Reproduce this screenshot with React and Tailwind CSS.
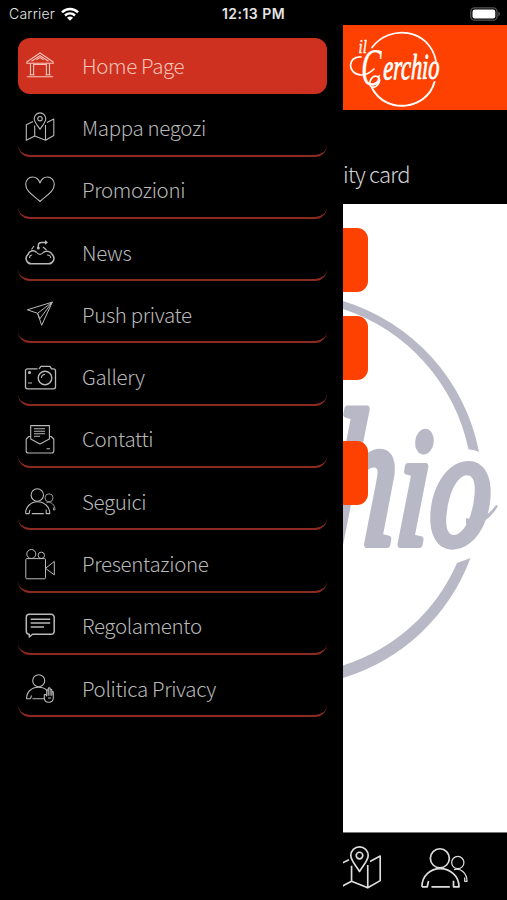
import React from 'react';

function HomeIcon() {
  return (
    <>
      <path d="M1.8 11 15 2l13.2 9v1.3H1.8zM6.5 10.2 15 4.8l8.5 5.4M11.5 8.8 15 6.6l3.5 2.2" />
      <path d="M5.5 12.5v12M8.6 12.5v12M21.4 12.5v12M24.5 12.5v12M8.6 13.5h12.8M1.8 25.8h26.4M4.5 23.8h5M20.5 23.8h5" />
    </>
  );
}

function MapIcon() {
  return (
    <>
      <path d="M15 16.3C12.5 12.2 9.2 9 9.2 5.7a5.8 5.8 0 0 1 11.6 0c0 3.3-3.3 6.5-5.8 10.6z" />
      <circle cx="15" cy="5.7" r="2.2" />
      <path d="M8 8.5 1.3 11.8v15.4l8.4-4.3 10.8 4.3 8.3-4.8V6L22 9.6M9.7 12.5v10.4M20.5 12v15.2" />
    </>
  );
}

function HeartIcon() {
  return <path d="M15 25.5C9.5 20 .7 16 .7 8.3.7 4.2 3.8 1 7.5 1c3.400 0 6.200 2.300 7.500 6 1.300-3.700 4.100-6 7.500-6 3.700 0 6.800 3.200 6.800 7.300C29.300 16 20.500 20 15 25.500z" />;
}

function NewsIcon() {
  return (
    <>
      <path strokeWidth="1.5" d="M7 25.800h16.500a5.400 5.400 0 0 0 4-9c-1.800-3.500-6.500-5-9.500-2M11.700 14.500C8.500 11.500 4 13 3 16.500a5.300 5.300 0 0 0 4 9.300" />
      <path d="M11.700 14.500c1.800 2.500 5 2.300 6.300.3M4.500 20c0-1.800 1-3 2.700-3M22 17c2.200-.3 3.700 1 3.700 3M6.500 11.500l2.500-3.500M18 9l3.500 3" />
      <path strokeWidth="1.4" d="M13.300 9.500V7.500c0-2 1-3 3-3h5" />
      <circle cx="13.300" cy="10" r="1.500" fill="currentColor" stroke="none" />
      <path d="m20 2 3 2.500-3 2.300z" fill="currentColor" stroke="none" />
    </>
  );
}

function PlaneIcon() {
  return <path strokeWidth="1" d="M27.300 2.100 2.300 9.800l10.300 3.500 4.100 12zM27.300 2.100 12.600 13.300M27.300 2.100 14.700 19M14.700 19l-2.100-5.700" />;
}

function CameraIcon() {
  return (
    <>
      <path strokeWidth="1.3" d="M12.500 5.800H2.500A2 2 0 0 0 .5 7.800v16a2 2 0 0 0 2 2h26a2 2 0 0 0 2-2v-16a2 2 0 0 0-2-2h-2l-1.500-2.500h-9L14 5.800" />
      <circle cx="20" cy="15" r="6.8" strokeWidth="1.4" />
      <path d="M16.500 15a3.500 3.500 0 0 1 3.500-3.500M3 20h4" />
      <circle cx="4.500" cy="9.500" r="1" fill="currentColor" />
    </>
  );
}

function MailIcon() {
  return (
    <>
      <path d="M5.700 14V.6h18.700V14l-9.500 5z" />
      <path d="M5.700 11.500H4L1.200 14v12a2 2 0 0 0 2 2h23.600a2 2 0 0 0 2-2V14L26 11.500h-1.600M9 3.700h11M9 6.200h11M9 8.700h11M9 11.200h6M21.500 23.800h3.500" />
    </>
  );
}

function PeopleIcon() {
  return (
    <>
      <circle cx="12.300" cy="8" r="6.200" />
      <path d="M.6 26.600C.6 19.500 6 14.700 12.500 14.700S24.800 19.500 24.800 26.600h-3.600v-4M.6 26.600h3.500l.8-3.800M6.800 26.600h12" />
      <circle cx="24" cy="10.800" r="4" strokeWidth=".8" />
      <path strokeWidth=".8" d="M21.500 15.500c4.500-1.500 8.500 2.500 8.500 7.500h-1.500v-2.500" />
    </>
  );
}

function VideoIcon() {
  return (
    <g strokeWidth="1">
      <circle cx="6.300" cy="4" r="4.500" />
      <circle cx="16.300" cy="5.300" r="3.200" />
      <rect x=".8" y="8.600" width="19.700" height="20.200" rx="1" />
      <path d="m20.500 18.300 8.800-6.800v13.400z" />
    </g>
  );
}

function ChatIcon() {
  return (
    <g strokeWidth="1.5">
      <path d="M3.800 2.300h22.400a3 3 0 0 1 3 3v14a3 3 0 0 1-3 3H7.500L4.300 25v-2.700a3 3 0 0 1-3-3v-14a3 3 0 0 1 2.500-3z" />
      <path d="M5.700 7.200h19.500M5.700 11h19.500M5.700 14.900H19" />
    </g>
  );
}

function PrivacyIcon() {
  return (
    <>
      <circle cx="13.700" cy="6.700" r="6" />
      <path d="M20 24.700H7.500M5.500 24.700H1.600c0-6.500 4.500-11.500 12-11.500 4 0 6.800 1.300 8.500 3.500M6.500 21.500l-1 3.200" />
      <path d="M19.300 20.500v3.200c0 6 8.800 6 9 .3v-5.500c0-1.200-1.500-1.200-1.500 0v2.700-5c0-1.200-1.700-1.200-1.700 0v5-6.500c0-1.200-1.800-1.200-1.800 0v6.500-4.500c0-1.200-1.600-1.200-1.600 0v5.300l-1.200-1.500zM23 24h3" />
    </>
  );
}

const MENU = [
  { label: 'Home Page', icon: HomeIcon },
  { label: 'Mappa negozi', icon: MapIcon },
  { label: 'Promozioni', icon: HeartIcon },
  { label: 'News', icon: NewsIcon },
  { label: 'Push private', icon: PlaneIcon },
  { label: 'Gallery', icon: CameraIcon },
  { label: 'Contatti', icon: MailIcon },
  { label: 'Seguici', icon: PeopleIcon },
  { label: 'Presentazione', icon: VideoIcon },
  { label: 'Regolamento', icon: ChatIcon },
  { label: 'Politica Privacy', icon: PrivacyIcon },
];

function Icon({ shape: Shape, className }) {
  return (
    <svg
      viewBox="0 0 30 30"
      className={`shrink-0 overflow-visible ${className}`}
      fill="none"
      stroke="currentColor"
      strokeWidth="1.1"
      strokeLinejoin="round"
    >
      <Shape />
    </svg>
  );
}

function StatusBar() {
  return (
    <header className="flex h-[25px] items-center justify-between pl-[9px] pr-[6px] pt-[2px] font-['Inter','Liberation_Sans',sans-serif] text-[14px] text-[#e4e4e4]">
      <div className="flex w-[120px] items-center gap-[6px]">
        <span className="tracking-[0.2px]">Carrier</span>
        <svg viewBox="0 0 18 14" className="h-[14px] w-[18px]" fill="none" stroke="#fff" strokeWidth="2.5">
          <path d="M1 5.300c4.500-4.400 11.500-4.400 16 0M4 8.500c2.900-2.700 7.100-2.700 10 0" />
          <path d="M9 13.800 6 10.700c1.700-1.500 4.300-1.500 6 0z" fill="#fff" stroke="none" />
        </svg>
      </div>
      <span className="-ml-[3px] text-[14px] font-semibold tracking-[0.45px]">12:13 PM</span>
      <div className="flex w-[120px] justify-end">
        <svg viewBox="0 0 31 14" className="h-[14px] w-[31px]">
          <rect x=".8" y=".8" width="26.200" height="12.400" rx="3.800" fill="none" stroke="#555" strokeWidth="1.3" />
          <rect x="2.500" y="2.500" width="22.800" height="9" rx="2.200" fill="#fff" />
          <path d="M28.300 4.800c2.200.8 2.200 3.600 0 4.400z" fill="#555" />
        </svg>
      </div>
    </header>
  );
}

function MenuItem({ item, active }) {
  return (
    <li
      className={`flex h-[56.3px] items-center rounded-[12px] pl-[7px] ${
        active ? 'bg-[#cf3120] text-[#f6c3b8]' : 'border-b-2 border-[#8c2a20] pt-[2px] text-[#b9b9b9]'
      }`}
    >
      <Icon shape={item.icon} className="h-[30px] w-[30px]" />
      <span className="-mt-[3px] ml-[27px] whitespace-nowrap text-[20.5px] leading-[28px] tracking-[-0.35px]">
        {item.label}
      </span>
    </li>
  );
}

/** Brand mark: open ring with the name written across it */
function Logo() {
  return (
    <svg
      viewBox="0 0 110 85"
      className="h-[85px] w-[110px] font-['Liberation_Serif',serif] italic"
      fill="none"
      stroke="#fff"
      strokeLinecap="round"
    >
      <path d="M29 22.500C47-1 86 3 93 36" strokeWidth="1.7" />
      <path d="M91.500 57C84 85 43 90 29 63" strokeWidth="2" />
      <g fill="#fff" strokeLinejoin="round">
        <text transform="translate(15.500 28) scale(.8 1)" fontSize="19" strokeWidth=".3">il</text>
        <text transform="translate(18 59.500) scale(.58 1)" fontSize="53" strokeWidth=".2">C</text>
        <text transform="translate(40 54.500) rotate(-1) skewX(-3) scale(.62 1)" fontSize="36" strokeWidth=".9">erchio</text>
      </g>
      <path d="M18 32C4 31 4 49 18 50c6 0 9-2 13-6M35 52c-7-4-11 9-6 10s10-6 6-10" strokeWidth="1.7" />
    </svg>
  );
}

function Watermark() {
  return (
    <svg
      viewBox="343 204 164 628"
      className="absolute inset-0 h-full w-full font-['Liberation_Serif',serif] italic"
      fill="#b9b8c7"
    >
      <path d="M343 301A197 197 0 0 1 479 452Q474 449 468.500 449.500A188 188 0 0 0 343 309z" />
      <path d="M470.500 558A197 197 0 0 1 343 678V665.500A185 185 0 0 0 457 563z" />
      <text
        transform="translate(324 544) skewX(-4) scale(.72 1)"
        fontSize="168"
        stroke="#b9b8c7"
        strokeWidth="8"
        strokeLinejoin="round"
      >
        <tspan fontSize="194">h</tspan>io
      </text>
      <path d="M466 524c14 3 25-6 32-18l-2-1c-8 11-18 17-30 13z" />
    </svg>
  );
}

export default function App() {
  return (
    <div className="flex h-[900px] w-[507px] flex-col overflow-hidden bg-black font-['Noto_Sans_CJK_SC','Noto_Sans',sans-serif] font-light">
      <StatusBar />
      <div className="flex min-h-0 flex-1">
        <aside className="w-[343px] shrink-0 pl-[18px] pr-[16px] pt-[13px]">
          <ul className="flex flex-col gap-[6px]">
            {MENU.map((item, i) => (
              <MenuItem key={item.label} item={item} active={i === 0} />
            ))}
          </ul>
        </aside>

        <main className="flex min-w-0 flex-1 flex-col">
          <div className="h-[85px] bg-[#fe4100]">
            <Logo />
          </div>
          <div className="flex h-[94px] items-center pt-[32px] text-[22px] leading-[30px] tracking-[-0.75px] text-[#d0d0d0]">
            <span className="whitespace-nowrap">ity card</span>
          </div>

          <section className="relative h-[628px] bg-white">
            <Watermark />
            <div className="relative flex flex-col pt-[24px]">
              <div className="h-[64px] w-[24.5px] rounded-r-[11px] bg-[#fe4100]" />
              <div className="mt-[24px] h-[64px] w-[24.5px] rounded-r-[11px] bg-[#fe4100]" />
              <div className="mt-[60.5px] h-[64px] w-[24.5px] rounded-r-[11px] bg-[#fe4100]" />
            </div>
          </section>

          <nav className="flex h-[68px] items-start overflow-hidden border-t border-[#777] text-[#dedede]">
            <Icon shape={MapIcon} className="-ml-[6px] mt-[14px] h-[45px] w-[45px]" />
            <Icon shape={PeopleIcon} className="ml-[39px] mt-[13px] h-[46px] w-[46px]" />
          </nav>
        </main>
      </div>
    </div>
  );
}
